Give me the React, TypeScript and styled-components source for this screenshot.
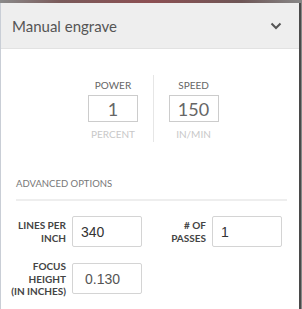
import React from "react";
import styled, { createGlobalStyle } from "styled-components";

const Global = createGlobalStyle`
  html, body { margin: 0; padding: 0; background: #ffffff; }
  body { font-family: Lato, "Open Sans", sans-serif; }
  * { box-sizing: border-box; }
`;

const Frame = styled.div`
  width: 302px;
  height: 309px;
  display: flex;
  flex-direction: column;
  background: linear-gradient(90deg, #8a8a8a 0%, #7a5a5a 20%, #8c4f52 50%, #6e5656 80%, #888 100%);
`;

const Panel = styled.div`
  flex: 1;
  margin-top: 3px;
  margin-right: 1px;
  display: flex;
  flex-direction: column;
  background: #fff;
  border-left: 1px solid #c9ced6;
  border-right: 2px solid #4a4a4a;
`;

const Header = styled.div`
  height: 46px;
  display: flex;
  align-items: center;
  justify-content: space-between;
  padding: 0 17px 0 11px;
  background: #eeeeee;
  border-bottom: 1px solid #e2e2e2;
  color: #555;
  font-size: 15px;
  font-weight: 400;
`;

const Body = styled.div`
  display: flex;
  flex-direction: column;
  padding: 26px 12px 0 15px;
`;

const Settings = styled.div`
  display: flex;
  justify-content: center;
  margin-left: 3px;
`;

const Setting = styled.div<{ $divider?: boolean }>`
  width: 80px;
  height: 67px;
  display: flex;
  flex-direction: column;
  align-items: center;
  ${(p) => (p.$divider ? "border-left: 1px solid #e6e6e6;" : "")}
`;

const SettingLabel = styled.div`
  font-size: 10px;
  color: #666;
  line-height: 12px;
  margin-top: 4px;
`;

const SettingBox = styled.div`
  width: 50px;
  height: 27px;
  margin-top: 4px;
  border: 1px solid #ccc;
  color: #666;
  font-size: 18px;
  display: flex;
  align-items: center;
  justify-content: center;
`;

const Unit = styled.div`
  font-size: 10px;
  line-height: 12px;
  color: #c8c8c8;
  margin-top: 6px;
`;

const SectionTitle = styled.div`
  margin-top: 36px;
  font-size: 9.5px;
  line-height: 12px;
  color: #777;
  padding-bottom: 9px;
  border-bottom: 2px solid #eeeeee;
`;

const Grid = styled.div`
  display: grid;
  grid-template-columns: 126px 126px;
  column-gap: 14px;
  row-gap: 13px;
  margin-top: 15px;
`;

const Field = styled.div`
  display: flex;
  align-items: center;
  justify-content: flex-end;
  gap: 6px;
`;

const FieldLabel = styled.div`
  flex-shrink: 0;
  text-align: right;
  white-space: pre-line;
  font-size: 10px;
  font-weight: 700;
  color: #444;
  line-height: 12.5px;
`;

const Input = styled.div<{ $indent?: number; $muted?: boolean }>`
  flex-shrink: 0;
  width: 70px;
  height: 31px;
  border: 1px solid #d4d4d4;
  border-radius: 2px;
  display: flex;
  align-items: center;
  padding-left: ${(p) => p.$indent ?? 8}px;
  font-family: "Liberation Sans", Arial, sans-serif;
  font-size: 14px;
  color: ${(p) => (p.$muted ? "#555" : "#333")};
`;

const Chevron = () => (
  <svg width="12" height="8" viewBox="0 0 12 8">
    <path d="M1.5 1.5 L6 6 L10.5 1.5" fill="none" stroke="#555" strokeWidth="2" />
  </svg>
);

export default function App() {
  return (
    <>
      <Global />
      <Frame>
        <Panel>
          <Header>
            <span>Manual engrave</span>
            <Chevron />
          </Header>
          <Body>
            <Settings>
              <Setting>
                <SettingLabel>POWER</SettingLabel>
                <SettingBox>1</SettingBox>
                <Unit>PERCENT</Unit>
              </Setting>
              <Setting $divider>
                <SettingLabel>SPEED</SettingLabel>
                <SettingBox>150</SettingBox>
                <Unit>IN/MIN</Unit>
              </Setting>
            </Settings>
            <SectionTitle>ADVANCED OPTIONS</SectionTitle>
            <Grid>
              <Field>
                <FieldLabel>{"LINES PER\nINCH"}</FieldLabel>
                <Input>340</Input>
              </Field>
              <Field>
                <FieldLabel>{"# OF\nPASSES"}</FieldLabel>
                <Input>1</Input>
              </Field>
              <Field>
                <FieldLabel>{"FOCUS\nHEIGHT\n(IN INCHES)"}</FieldLabel>
                <Input $indent={12} $muted>0.130</Input>
              </Field>
            </Grid>
          </Body>
        </Panel>
      </Frame>
    </>
  );
}
